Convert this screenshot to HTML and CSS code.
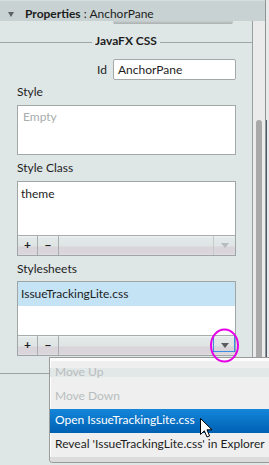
FILE: index.html
```html
<!DOCTYPE html>
<html lang="en">
<head>
	<meta charset="utf-8">
	<title>Properties : AnchorPane</title>
	<link rel="stylesheet" href="styles.css">
</head>
<body>
	<div class="inspector">
		<div class="header">
			<span class="caret"></span><b>Properties</b>&nbsp;: AnchorPane
		</div>
		<div class="main">
			<div class="content">
				<div class="stub"></div>
				<div class="section"><span>JavaFX CSS</span></div>

				<div class="idrow">
					<span>Id</span>
					<div class="field">AnchorPane</div>
				</div>

				<div class="label">Style</div>
				<div class="area">Empty</div>

				<div class="label">Style Class</div>
				<div class="list">
					<div class="items">
						<div class="item">theme</div>
					</div>
					<div class="tools">
						<div class="btn">+</div>
						<div class="btn minus">&minus;</div>
						<div class="fill"></div>
						<div class="drop"><span class="arrow"></span></div>
					</div>
				</div>

				<div class="label sheets">Stylesheets</div>
				<div class="list">
					<div class="items">
						<div class="item selected">IssueTrackingLite.css</div>
					</div>
					<div class="tools">
						<div class="btn">+</div>
						<div class="btn minus">&minus;</div>
						<div class="fill"></div>
						<div class="drop focus"><span class="arrow dark"></span></div>
					</div>
				</div>
			</div>
			<div class="scroll"><div class="thumb"></div></div>
		</div>
	</div>
	<div class="frame"><div class="frameline"></div></div>

	<!-- context menu opened from the stylesheets drop button -->
	<div class="menu">
		<div class="mi off first">Move Up</div>
		<div class="mi off">Move Down</div>
		<div class="mi hot">Open IssueTrackingLite.css</div>
		<div class="mi">Reveal 'IssueTrackingLite.css' in Explorer</div>
		<div class="foot"></div>
	</div>

	<svg class="mark" width="32" height="36" viewBox="0 0 32 36">
		<ellipse cx="15.5" cy="17.5" rx="13.5" ry="16" fill="none" stroke="#e600e6" stroke-width="2"/>
	</svg>

	<svg class="cursor" width="14" height="21" viewBox="0 0 14 21">
		<path d="M0.5 0.5 L0.5 16.5 L4.3 12.8 L7 19 L9.6 17.9 L7 11.8 L12 11.8 Z" fill="#fff" stroke="#000" stroke-width="1" stroke-linejoin="miter"/>
	</svg>
</body>
</html>
```

FILE: styles.css
```css
*{
	margin:0;
	padding:0;
	box-sizing: border-box;
}

body {
	width: 269px;
	height: 465px;
	overflow: hidden;
	position: relative;
	display: flex;
	background: #dee6e6;
	font-family: Lato, "Open Sans", sans-serif;
	font-size: 12px;
	line-height: 14px;
	color: #1e1e1e;
}

.inspector {
	width: 266px;
	height: 374px;
	border-right: 1px solid #8e9595;
	border-bottom: 1px solid #9aa2a2;
	display: flex;
	flex-direction: column;
}

.frame {
	width: 3px;
	background: #e9e9e9;
}
.frameline {
	width: 1px;
	height: 240px;
	margin-top: 120px;
	background: #4f5868;
}

/* header bar */
.header {
	height: 21px;
	padding: 4px 0 0 8px;
	line-height: 17px;
	font-size: 12px;
	background: #c8d2d2;
	border-top: 1px solid #d6dede;
	white-space: nowrap;
}
.caret {
	display: inline-block;
	width: 0;
	height: 0;
	border-left: 3px solid transparent;
	border-right: 3px solid transparent;
	border-top: 5px solid #5a6262;
	margin-right: 11px;
	vertical-align: 1px;
}

.main {
	flex: 1;
	display: flex;
}

.content {
	width: 253px;
	border-right: 1px solid #9aa0a0;
	padding: 0 16px 0 17px;
}

.scroll {
	width: 12px;
	background: #ebebeb;
	padding-top: 99px;
}
.thumb {
	width: 6px;
	height: 300px;
	margin-left: 3px;
	background: #a9a9a9;
	border-radius: 3px 3px 0 0;
}

/* bottom of a field scrolled out of view */
.stub {
	width: 120px;
	height: 3px;
	margin-left: 96px;
	background: linear-gradient(#c9cece, #aab0b0);
	border-radius: 0 0 2px 2px;
}

.section {
	display: flex;
	align-items: center;
	margin: 10px -16px 0 -17px;
	font-weight: 700;
}
.section::before, .section::after {
	content: "";
	flex: 1;
	height: 1px;
	margin-top: 2px;
	background: #9ea6a6;
}
.section span {
	padding: 0 3px;
}

.idrow {
	display: flex;
	align-items: center;
	justify-content: flex-end;
	gap: 6px;
	margin-top: 11px;
}

.field {
	width: 123px;
	height: 21px;
	padding-left: 4px;
	line-height: 19px;
	background: #fff;
	border: 1px solid #a3a9a9;
	border-radius: 2px;
}

.label {
	margin-top: 5px;
}
.label.sheets, .list + .label {
	margin-top: 6px;
}

.area {
	height: 50px;
	margin-top: 6px;
	padding: 4px 5px;
	background: #fff;
	border: 1px solid #a3a9a9;
	color: #a8adad;
}
.area + .label {
	margin-top: 6px;
}

.list {
	margin-top: 6px;
	background: #fff;
	border: 1px solid #a0a6a6;
}
.sheets + .list {
	margin-top: 5px;
}
.items {
	height: 53px;
}
.item {
	height: 24px;
	line-height: 24px;
	padding-left: 3px;
}
.item.selected {
	background: #c4e3f5;
}

.tools {
	display: flex;
	height: 20px;
	border-top: 1px solid #a8aeae;
	background: linear-gradient(#f1f3f3 0, #e3e8e8 2px, #dfe4e4 10px, #d9d4da 11px, #dad6dc 18px, #e3e3e3 19px);
}
.btn {
	width: 20px;
	border-right: 1px solid #a8aeae;
	text-align: center;
	line-height: 18px;
	font-weight: 700;
	font-size: 12px;
	color: #222;
}
.btn.minus {
	width: 21px;
}
.fill {
	flex: 1;
}
.drop {
	width: 22px;
	border-left: 1px solid #c4caca;
	display: flex;
	align-items: center;
	justify-content: center;
}
.drop.focus {
	border-left: 1px solid #3a8de0;
	box-shadow: inset -1px -1px 0 #3a8de0;
	margin-bottom: 3px;
}
.arrow {
	width: 0;
	height: 0;
	border-left: 4px solid transparent;
	border-right: 4px solid transparent;
	border-top: 5px solid #b7bbbb;
}
.arrow.dark {
	border-top-color: #5c5c5c;
	margin-top: 3px;
}

/* popup menu */
.menu {
	position: absolute;
	left: 49px;
	top: 357px;
	width: 220px;
	height: 106px;
	padding-top: 3px;
	border: 1px solid #9a9a9a;
	border-right: none;
	border-radius: 0 0 0 4px;
	background: linear-gradient(#fdfdfd 0, #fdfdfd 3px, #efefef 3px);
	box-shadow: inset 1px 0 0 #fff;
	overflow: hidden;
}
.mi {
	height: 24px;
	line-height: 21px;
	padding-left: 5px;
	white-space: nowrap;
}
.mi.off {
	color: #b8bdbd;
}
.mi.first {
	background: linear-gradient(transparent 7px, #e2e7e7 7px, #e2e7e7 16px, transparent 16px);
}
.mi.hot {
	color: #fff;
	background: linear-gradient(#1486da, #0060b2);
}
.foot {
	height: 6px;
	background: #dcdcdc;
}

.mark {
	position: absolute;
	left: 209px;
	top: 328px;
}

.cursor {
	position: absolute;
	left: 200px;
	top: 418px;
}
```
